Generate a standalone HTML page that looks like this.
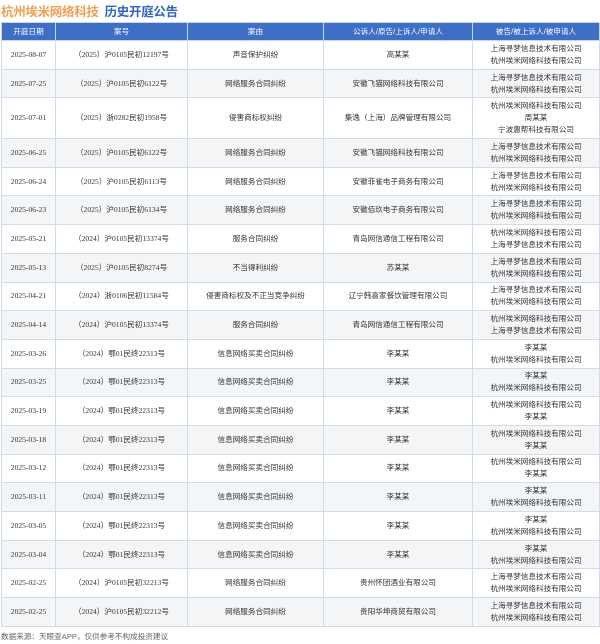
<!DOCTYPE html>
<html><head><meta charset="utf-8"><style>
*{margin:0;padding:0;box-sizing:border-box}
body{width:600px;height:644px;background:#fff;font-family:"Liberation Sans","Noto Sans CJK SC",sans-serif;position:relative;overflow:hidden;color:#333}
.t{position:absolute;left:1px;top:1px;font-size:12.5px;font-weight:bold;letter-spacing:-0.3px}
.t .o{color:#f0a050}.t .b{color:#2e64c0;margin-left:6px}
table{position:absolute;left:1px;top:22px;width:598px;border-collapse:collapse;table-layout:fixed;font-size:7.6px}
th{background:#3d6fc6;color:#fff;font-weight:normal;height:18px;border:1px solid #c7d6ea}
td{border:1px solid #cfdcec;text-align:center;height:28.7px;line-height:12px;font-family:"Liberation Serif","Noto Sans CJK SC",sans-serif}
td:nth-child(n+3){font-family:"Liberation Sans","Noto Sans CJK SC",sans-serif}
tr:nth-child(even) td{background:#f4f5f7}
.f{position:absolute;left:1px;top:631px;font-size:7.6px;color:#666}
</style></head><body>
<div class="t"><span class="o">杭州埃米网络科技</span><span class="b">历史开庭公告</span></div>
<table>
<colgroup><col style="width:54px"><col style="width:132px"><col style="width:136px"><col style="width:149px"><col style="width:127px"></colgroup>
<thead><tr><th>开庭日期</th><th>案号</th><th>案由</th><th>公诉人/原告/上诉人/申请人</th><th>被告/被上诉人/被申请人</th></tr></thead>
<tbody>
<tr><td>2025-08-07</td><td>（2025）沪0105民初12197号</td><td>声音保护纠纷</td><td>高某某</td><td>上海寻梦信息技术有限公司<br>杭州埃米网络科技有限公司</td></tr>
<tr><td>2025-07-25</td><td>（2025）沪0105民初6122号</td><td>网络服务合同纠纷</td><td>安徽飞猫网络科技有限公司</td><td>上海寻梦信息技术有限公司<br>杭州埃米网络科技有限公司</td></tr>
<tr><td style="height:40.7px">2025-07-01</td><td>（2025）浙0282民初1958号</td><td>侵害商标权纠纷</td><td>集逸（上海）品牌管理有限公司</td><td>杭州埃米网络科技有限公司<br>周某某<br>宁波惠帮科技有限公司</td></tr>
<tr><td>2025-06-25</td><td>（2025）沪0105民初6122号</td><td>网络服务合同纠纷</td><td>安徽飞猫网络科技有限公司</td><td>上海寻梦信息技术有限公司<br>杭州埃米网络科技有限公司</td></tr>
<tr><td>2025-06-24</td><td>（2025）沪0105民初6113号</td><td>网络服务合同纠纷</td><td>安徽菲雀电子商务有限公司</td><td>上海寻梦信息技术有限公司<br>杭州埃米网络科技有限公司</td></tr>
<tr><td>2025-06-23</td><td>（2025）沪0105民初6134号</td><td>网络服务合同纠纷</td><td>安徽佰玖电子商务有限公司</td><td>上海寻梦信息技术有限公司<br>杭州埃米网络科技有限公司</td></tr>
<tr><td>2025-05-21</td><td>（2024）沪0105民初13374号</td><td>服务合同纠纷</td><td>青岛网信通信工程有限公司</td><td>杭州埃米网络科技有限公司<br>上海寻梦信息技术有限公司</td></tr>
<tr><td>2025-05-13</td><td>（2025）沪0105民初8274号</td><td>不当得利纠纷</td><td>苏某某</td><td>上海寻梦信息技术有限公司<br>杭州埃米网络科技有限公司</td></tr>
<tr><td>2025-04-21</td><td>（2024）浙0106民初11584号</td><td>侵害商标权及不正当竞争纠纷</td><td>辽宁韩喜家餐饮管理有限公司</td><td>上海寻梦信息技术有限公司<br>杭州埃米网络科技有限公司</td></tr>
<tr><td>2025-04-14</td><td>（2024）沪0105民初13374号</td><td>服务合同纠纷</td><td>青岛网信通信工程有限公司</td><td>杭州埃米网络科技有限公司<br>上海寻梦信息技术有限公司</td></tr>
<tr><td>2025-03-26</td><td>（2024）鄂01民终22313号</td><td>信息网络买卖合同纠纷</td><td>李某某</td><td>李某某<br>杭州埃米网络科技有限公司</td></tr>
<tr><td>2025-03-25</td><td>（2024）鄂01民终22313号</td><td>信息网络买卖合同纠纷</td><td>李某某</td><td>李某某<br>杭州埃米网络科技有限公司</td></tr>
<tr><td>2025-03-19</td><td>（2024）鄂01民终22313号</td><td>信息网络买卖合同纠纷</td><td>李某某</td><td>杭州埃米网络科技有限公司<br>李某某</td></tr>
<tr><td>2025-03-18</td><td>（2024）鄂01民终22313号</td><td>信息网络买卖合同纠纷</td><td>李某某</td><td>杭州埃米网络科技有限公司<br>李某某</td></tr>
<tr><td>2025-03-12</td><td>（2024）鄂01民终22313号</td><td>信息网络买卖合同纠纷</td><td>李某某</td><td>杭州埃米网络科技有限公司<br>李某某</td></tr>
<tr><td>2025-03-11</td><td>（2024）鄂01民终22313号</td><td>信息网络买卖合同纠纷</td><td>李某某</td><td>李某某<br>杭州埃米网络科技有限公司</td></tr>
<tr><td>2025-03-05</td><td>（2024）鄂01民终22313号</td><td>信息网络买卖合同纠纷</td><td>李某某</td><td>李某某<br>杭州埃米网络科技有限公司</td></tr>
<tr><td>2025-03-04</td><td>（2024）鄂01民终22313号</td><td>信息网络买卖合同纠纷</td><td>李某某</td><td>李某某<br>杭州埃米网络科技有限公司</td></tr>
<tr><td>2025-02-25</td><td>（2024）沪0105民初32213号</td><td>网络服务合同纠纷</td><td>贵州怀团酒业有限公司</td><td>上海寻梦信息技术有限公司<br>杭州埃米网络科技有限公司</td></tr>
<tr><td>2025-02-25</td><td>（2024）沪0105民初32212号</td><td>网络服务合同纠纷</td><td>贵阳华坤商贸有限公司</td><td>上海寻梦信息技术有限公司<br>杭州埃米网络科技有限公司</td></tr>
</tbody></table>
<div class="f">数据来源：天眼查APP，仅供参考不构成投资建议</div>
</body></html>
